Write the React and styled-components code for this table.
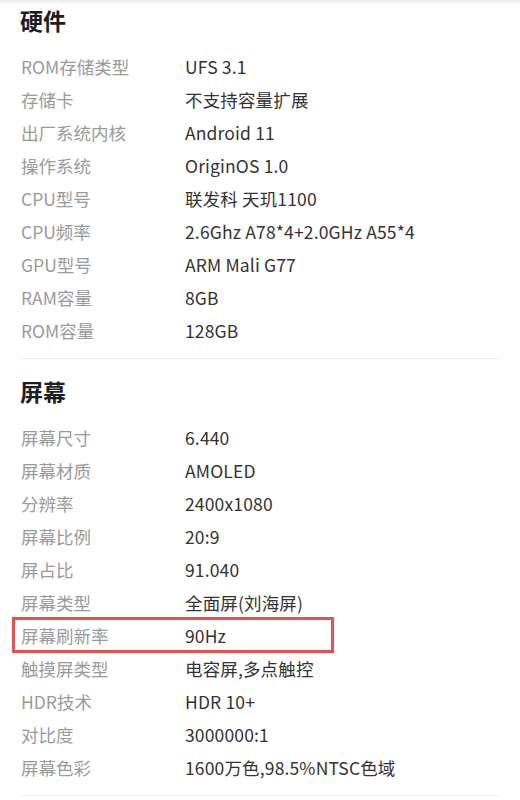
import React from "react";
import styled, { createGlobalStyle } from "styled-components";

const Global = createGlobalStyle`
  html, body { margin: 0; padding: 0; background: #ffffff; }
  body { font-family: "Noto Sans CJK SC", "Noto Sans", sans-serif; -webkit-font-smoothing: antialiased; }
`;

const Page = styled.div`
  position: relative;
  width: 520px;
  min-height: 800px;
  background: #fff;
  overflow: hidden;
`;

const TopShade = styled.div`
  position: absolute;
  top: 0;
  left: 0;
  right: 0;
  height: 5px;
  background: linear-gradient(#ececec, rgba(255, 255, 255, 0));
`;

const Content = styled.div`
  padding: 0 20px;
`;

const Section = styled.section`
  border-bottom: 1px solid #efefef;
  padding-top: ${(p) => p.$top}px;
  padding-bottom: 11px;
`;

const Title = styled.h2`
  margin: 0 0 10px;
  height: 40px;
  line-height: 40px;
  font-size: 23px;
  font-weight: 700;
  color: #1e1e1e;
`;

const Rows = styled.div`
  display: flex;
  flex-direction: column;
`;

const Row = styled.div`
  position: relative;
  display: grid;
  grid-template-columns: 165px 1fr;
  height: 33px;
  align-items: center;
  font-size: 17.5px;
  line-height: 33px;

  ${(p) =>
    p.$highlight &&
    `
    &::after {
      content: "";
      position: absolute;
      left: -8px;
      top: -2px;
      width: 322px;
      height: 36px;
      box-sizing: border-box;
      border: 3px solid #e65250;
      pointer-events: none;
    }
  `}
`;

const Label = styled.span`
  color: #9a9a9a;
  padding-left: 1px;
`;

const Value = styled.span`
  color: #333333;
  letter-spacing: 0.15px;
`;

const hardware = [
  ["ROM存储类型", "UFS 3.1"],
  ["存储卡", "不支持容量扩展"],
  ["出厂系统内核", "Android 11"],
  ["操作系统", "OriginOS 1.0"],
  ["CPU型号", "联发科 天玑1100"],
  ["CPU频率", "2.6Ghz A78*4+2.0GHz A55*4"],
  ["GPU型号", "ARM Mali G77"],
  ["RAM容量", "8GB"],
  ["ROM容量", "128GB"],
];

const screen = [
  ["屏幕尺寸", "6.440"],
  ["屏幕材质", "AMOLED"],
  ["分辨率", "2400x1080"],
  ["屏幕比例", "20:9"],
  ["屏占比", "91.040"],
  ["屏幕类型", "全面屏(刘海屏)"],
  ["屏幕刷新率", "90Hz", true],
  ["触摸屏类型", "电容屏,多点触控"],
  ["HDR技术", "HDR 10+"],
  ["对比度", "3000000:1"],
  ["屏幕色彩", "1600万色,98.5%NTSC色域"],
];

function Spec({ title, items, top }) {
  return (
    <Section $top={top}>
      <Title>{title}</Title>
      <Rows>
        {items.map(([k, v, hl]) => (
          <Row key={k} $highlight={hl}>
            <Label>{k}</Label>
            <Value>{v}</Value>
          </Row>
        ))}
      </Rows>
    </Section>
  );
}

export default function App() {
  return (
    <Page>
      <Global />
      <TopShade />
      <Content>
        <Spec title="硬件" items={hardware} top={0} />
        <Spec title="屏幕" items={screen} top={12} />
      </Content>
    </Page>
  );
}
